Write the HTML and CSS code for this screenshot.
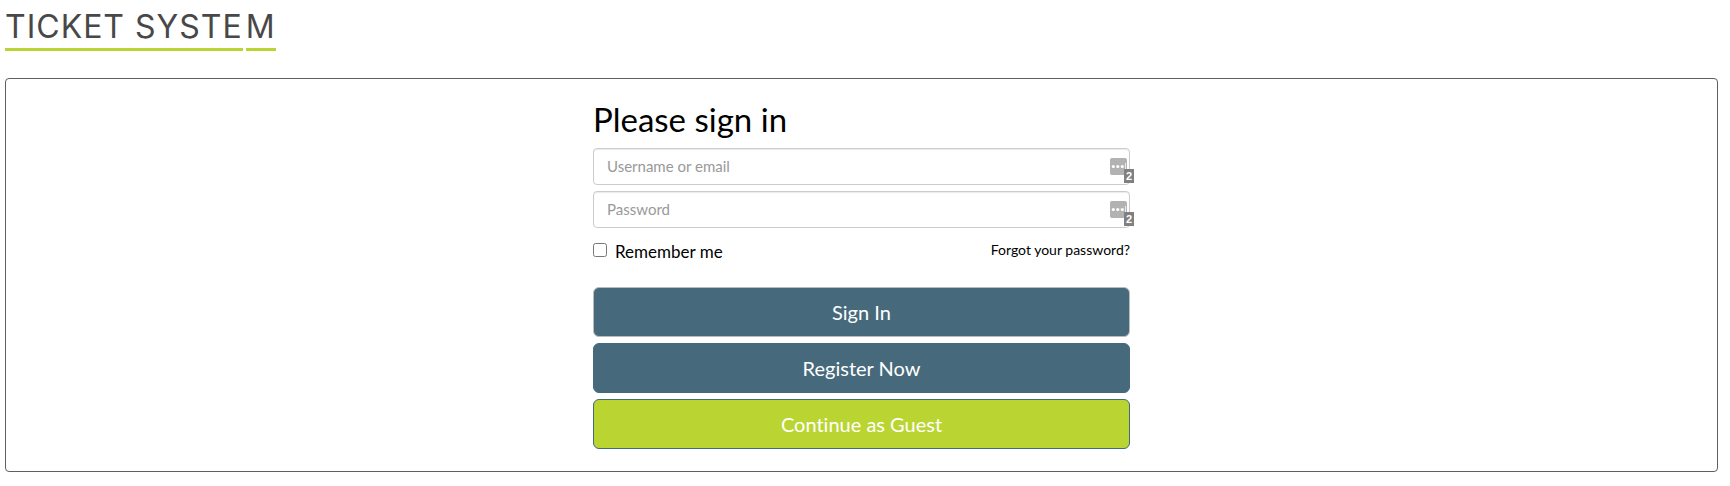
FILE: index.html
```html
<!DOCTYPE html>
<html lang="en">
<head>
<meta charset="utf-8">
<meta name="viewport" content="width=device-width, initial-scale=1">
<title>Ticket System</title>
<link rel="stylesheet" href="styles.css">
</head>
<body>
<h1 class="brand"><span class="brand-part">TICKET SYSTE</span><span class="brand-part">M</span></h1>
<main class="panel">
  <form class="signin">
    <h2 class="signin-title">Please sign in</h2>
    <div class="field">
      <input class="field-input" type="text" placeholder="Username or email" aria-label="Username or email">
      <span class="manager">
        <svg class="manager-icon" viewBox="0 0 17 17" aria-hidden="true"><rect width="17" height="17" rx="2" fill="#b2b2b2"/><g fill="#fff"><circle cx="3.3" cy="8.5" r="1.6"/><circle cx="7.8" cy="8.5" r="1.6"/><circle cx="12.3" cy="8.5" r="1.6"/><path d="M15 5h1v7h-1z" opacity=".75"/></g></svg>
        <span class="manager-count">2</span>
      </span>
    </div>
    <div class="field">
      <input class="field-input" type="password" placeholder="Password" aria-label="Password">
      <span class="manager">
        <svg class="manager-icon" viewBox="0 0 17 17" aria-hidden="true"><rect width="17" height="17" rx="2" fill="#b2b2b2"/><g fill="#fff"><circle cx="3.3" cy="8.5" r="1.6"/><circle cx="7.8" cy="8.5" r="1.6"/><circle cx="12.3" cy="8.5" r="1.6"/><path d="M15 5h1v7h-1z" opacity=".75"/></g></svg>
        <span class="manager-count">2</span>
      </span>
    </div>
    <div class="options">
      <input class="remember-box" type="checkbox" id="remember">
      <label class="remember-label" for="remember">Remember me</label>
      <a class="forgot" href="#">Forgot your password?</a>
    </div>
    <div class="actions">
      <button class="btn btn-signin" type="submit">Sign In</button>
      <button class="btn" type="button">Register Now</button>
      <button class="btn btn-guest" type="button">Continue as Guest</button>
    </div>
  </form>
</main>
</body>
</html>
```
FILE: styles.css
```css
* {
  box-sizing: border-box;
}

body {
  margin: 0;
  padding: 8px 12px 14px 5px;
  background: #fff;
  color: #000;
  font-family: Lato, sans-serif;
}

.brand {
  display: flex;
  gap: 3px;
  margin: 0 0 27px;
  color: #484848;
  font-family: Inter, sans-serif;
  font-size: 32px;
  font-weight: 400;
  line-height: 38px;
  letter-spacing: 1px;
}

.brand-part {
  padding-bottom: 2px;
  border-bottom: 3px solid #bad532;
}

.panel {
  padding: 20px 16px 22px;
  border: 1px solid #5f6062;
  border-radius: 4px;
}

.signin {
  max-width: 537px;
  margin: 0 auto;
}

.signin-title {
  margin: 0 0 9px;
  font-size: 33px;
  font-weight: 400;
  line-height: 40px;
}

.field {
  position: relative;
  margin-bottom: 6px;
}

.field-input {
  display: block;
  width: 100%;
  height: 37px;
  padding: 5px 13px 7px;
  border: 1px solid #ccc;
  border-radius: 4px;
  box-shadow: inset 0 1px 1px rgba(0, 0, 0, 0.08);
  font-family: inherit;
  font-size: 15px;
}

.field-input::placeholder {
  color: #999;
  opacity: 1;
}

.manager {
  position: absolute;
  top: 10px;
  right: 3px;
  width: 17px;
  height: 17px;
}

.manager-icon {
  display: block;
  width: 17px;
  height: 17px;
}

.manager-count {
  position: absolute;
  top: 11px;
  left: 14px;
  width: 10px;
  height: 14px;
  background: #808080;
  color: #fff;
  font: bold 11px/14px "Liberation Sans", sans-serif;
  text-align: center;
}

.options {
  display: flex;
  align-items: center;
  height: 34px;
  padding-bottom: 2px;
}

.remember-box {
  width: 14px;
  height: 14px;
  margin: 0 8px 0 0;
}

.remember-label {
  padding-top: 2px;
  font-size: 17px;
}

.forgot {
  margin-left: auto;
  padding-bottom: 2px;
  color: #000;
  font-size: 14px;
  text-decoration: none;
}

.actions {
  display: grid;
  gap: 6px;
  padding-top: 19px;
}

.btn {
  height: 50px;
  padding: 0 16px;
  border: 1px solid #466a7b;
  border-radius: 6px;
  background: #466a7b;
  color: #fff;
  font-family: inherit;
  font-size: 20px;
  font-variant-ligatures: no-common-ligatures;
}

.btn-signin {
  border-color: #bbb;
}

.btn-guest {
  background: #bad532;
}
```
